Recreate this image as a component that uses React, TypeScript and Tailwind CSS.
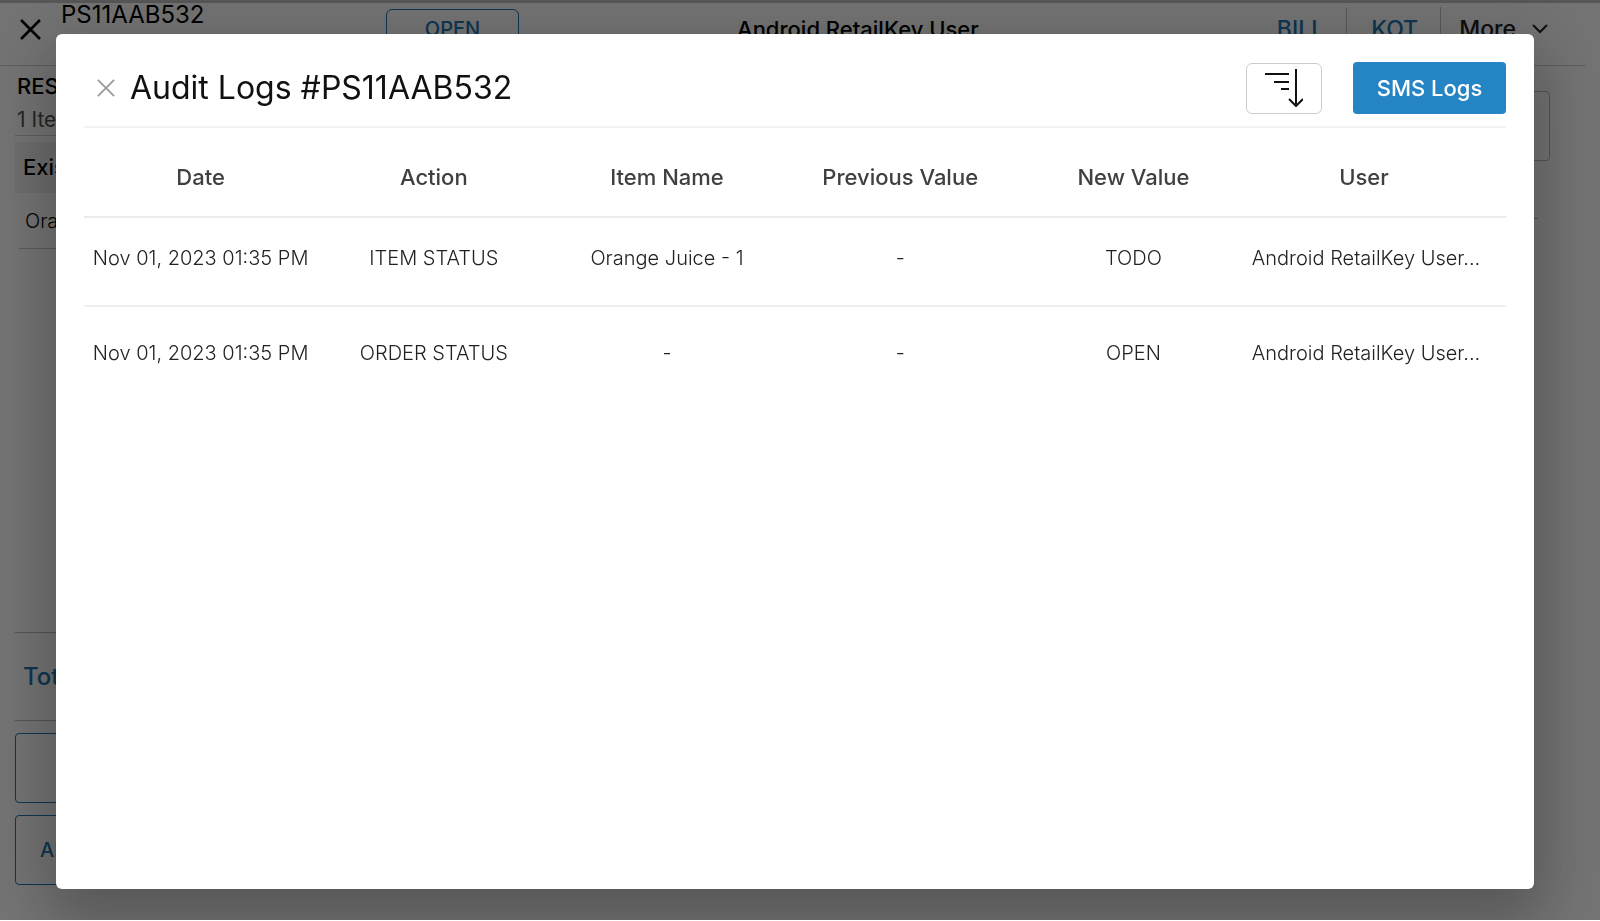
import React from 'react';

const logs = [
  {
    date: 'Nov 01, 2023 01:35 PM',
    action: 'ITEM STATUS',
    item: 'Orange Juice - 1',
    previous: '-',
    next: 'TODO',
    user: 'Android RetailKey User...',
  },
  {
    date: 'Nov 01, 2023 01:35 PM',
    action: 'ORDER STATUS',
    item: '-',
    previous: '-',
    next: 'OPEN',
    user: 'Android RetailKey User...',
  },
];

const columns = ['Date', 'Action', 'Item Name', 'Previous Value', 'New Value', 'User'];

const CloseIcon: React.FC<{ className: string }> = ({ className }) => (
  <svg viewBox="0 0 20 20" className={className} fill="none" stroke="currentColor" aria-hidden="true">
    <path d="M1 1l18 18M19 1L1 19" />
  </svg>
);

const SortIcon: React.FC = () => (
  <svg width="38" height="38" viewBox="0 0 38 38" fill="none" stroke="#111" strokeWidth="2" aria-hidden="true">
    <path d="M0 5h24M9 13h15M16 20h8M31 0v36M24 30l7 7 7-7" />
  </svg>
);

const OrderHeader: React.FC = () => (
  <header className="mr-3.5 flex h-[63px] items-start border-b border-[#d0d0d0]">
    <button type="button" aria-label="Close order" className="ml-5 mt-4 text-black">
      <CloseIcon className="h-[21px] w-[21px] stroke-[2.5]" />
    </button>
    <h2 className="ml-5 -mt-1 w-[325px] text-2xl leading-8 text-black">PS11AAB532</h2>
    <span className="mt-1.5 h-10 w-[133px] rounded-md border border-[#2077b3] text-center text-xl font-medium leading-[38px] text-[#2077b3]">
      OPEN
    </span>
    <span className="flex-1 pr-14 pt-2.5 text-center text-[22px] font-medium leading-8 text-black">
      Android RetailKey User
    </span>
    <nav className="flex h-14 pt-1 text-[23px] font-medium leading-8">
      <button type="button" className="border-r border-[#c4c4c4] pb-4 pl-6 pr-[22px] pt-1.5 text-[#2077b3]">BILL</button>
      <button type="button" className="border-r border-[#c4c4c4] pb-4 pl-6 pr-[22px] pt-1.5 text-[#2077b3]">KOT</button>
      <button type="button" className="flex gap-4 pb-4 pl-[18px] pr-[38px] pt-1.5 text-[#222]">
        More
        <svg width="16" height="32" viewBox="0 0 16 32" fill="none" stroke="currentColor" strokeWidth="2" aria-hidden="true">
          <path d="M1 12l7 7 7-7" />
        </svg>
      </button>
    </nav>
  </header>
);

const OrderSummary: React.FC = () => (
  <aside className="flex w-[480px] flex-col pl-[15px]">
    <div className="h-[70px] border-b border-[#d0d0d0] pt-1">
      <h3 className="pl-0.5 text-[22px] font-medium leading-8 text-black">REST</h3>
      <p className="pl-0.5 pt-0.5 text-[21px] leading-8 text-[#555]">1 Item</p>
    </div>
    <h4 className="mt-1.5 h-[51px] bg-[#f0f0f0] pl-2 text-[22px] font-medium leading-[51px] text-black">Existing</h4>
    <p className="ml-1 h-14 border-b border-[#c8c8c8] pl-1.5 text-xl font-light leading-[56px] text-black">Orange Juice</p>
    <p className="mt-auto h-[89px] border-y border-[#bbb] pl-2 text-2xl font-medium leading-[88px] text-[#2077b3]">Total</p>
    <button type="button" aria-label="Payment" className="mt-3 h-[70px] rounded border border-[#2077b3]" />
    <button type="button" className="mb-9 mt-3 h-[70px] rounded border border-[#2077b3] pl-6 text-left text-xl font-medium text-[#2077b3]">
      ADD ITEM
    </button>
  </aside>
);

const AuditLogTable: React.FC = () => (
  <table className="w-full table-fixed text-center">
    <colgroup>
      <col className="w-[16.4%]" />
      <col className="w-[16.4%]" />
      <col className="w-[16.4%]" />
      <col className="w-[16.4%]" />
      <col className="w-[16.4%]" />
      <col />
    </colgroup>
    <thead>
      <tr className="h-[89px] border-b-2 border-[#ebebeb]">
        {columns.map((column) => (
          <th key={column} scope="col" className="pt-2.5 text-[22px] font-medium text-[#404040] last:pr-7">
            {column}
          </th>
        ))}
      </tr>
    </thead>
    <tbody className="text-xl font-light text-[#222]">
      {logs.map((log) => (
        <tr key={log.action} className="h-[89px] border-b-2 border-[#efefef] last:h-[100px] last:border-0">
          <td className="whitespace-nowrap pb-2">{log.date}</td>
          <td className="pb-2">{log.action}</td>
          <td className="pb-2">{log.item}</td>
          <td className="pb-2">{log.previous}</td>
          <td className="pb-2">{log.next}</td>
          <td className="whitespace-nowrap pb-2 pr-6">{log.user}</td>
        </tr>
      ))}
    </tbody>
  </table>
);

const AuditLogDialog: React.FC = () => (
  <div className="fixed inset-x-0 bottom-px top-0 flex overflow-hidden bg-black/55 pb-[31px] pl-14 pr-[66px] pt-[34px]">
    <section
      role="dialog"
      aria-labelledby="audit-title"
      className="flex-1 rounded-md bg-white px-7 shadow-[0_32px_56px_4px_rgba(0,0,0,0.14),0_12px_66px_16px_rgba(0,0,0,0.14)]"
    >
      <div className="flex h-[94px] items-center border-b-2 border-[#f2f2f2] pt-4">
        <button type="button" aria-label="Close" className="ml-[13px] text-[#999]">
          <CloseIcon className="h-[18px] w-[18px] stroke-2" />
        </button>
        <h1 id="audit-title" className="ml-[15px] text-[32px] leading-10 text-[#111]">
          Audit Logs #PS11AAB532
        </h1>
        <button
          type="button"
          aria-label="Sort"
          className="ml-auto flex h-[51px] w-[76px] items-center justify-center rounded-md border border-[#ccc]"
        >
          <SortIcon />
        </button>
        <button type="button" className="ml-[31px] h-[52px] w-[153px] rounded bg-[#2585c4] text-[22px] font-medium text-white">
          SMS Logs
        </button>
      </div>
      <AuditLogTable />
    </section>
  </div>
);

const App: React.FC = () => {
  return (
    <div className="h-screen overflow-hidden bg-white font-['Inter','Liberation_Sans',sans-serif]">
      <div className="flex h-full flex-col border-t-[3px] border-[#c0c0c0]">
        <OrderHeader />
        <main className="flex flex-1">
          <OrderSummary />
          <div className="flex-1 pl-10 pr-[50px] pt-[25px]">
            <div className="h-[70px] rounded border border-[#bbb]" />
            <div className="mr-3 mt-[57px] border-b border-[#bbb]" />
          </div>
        </main>
      </div>
      <AuditLogDialog />
    </div>
  );
};

export default App;
